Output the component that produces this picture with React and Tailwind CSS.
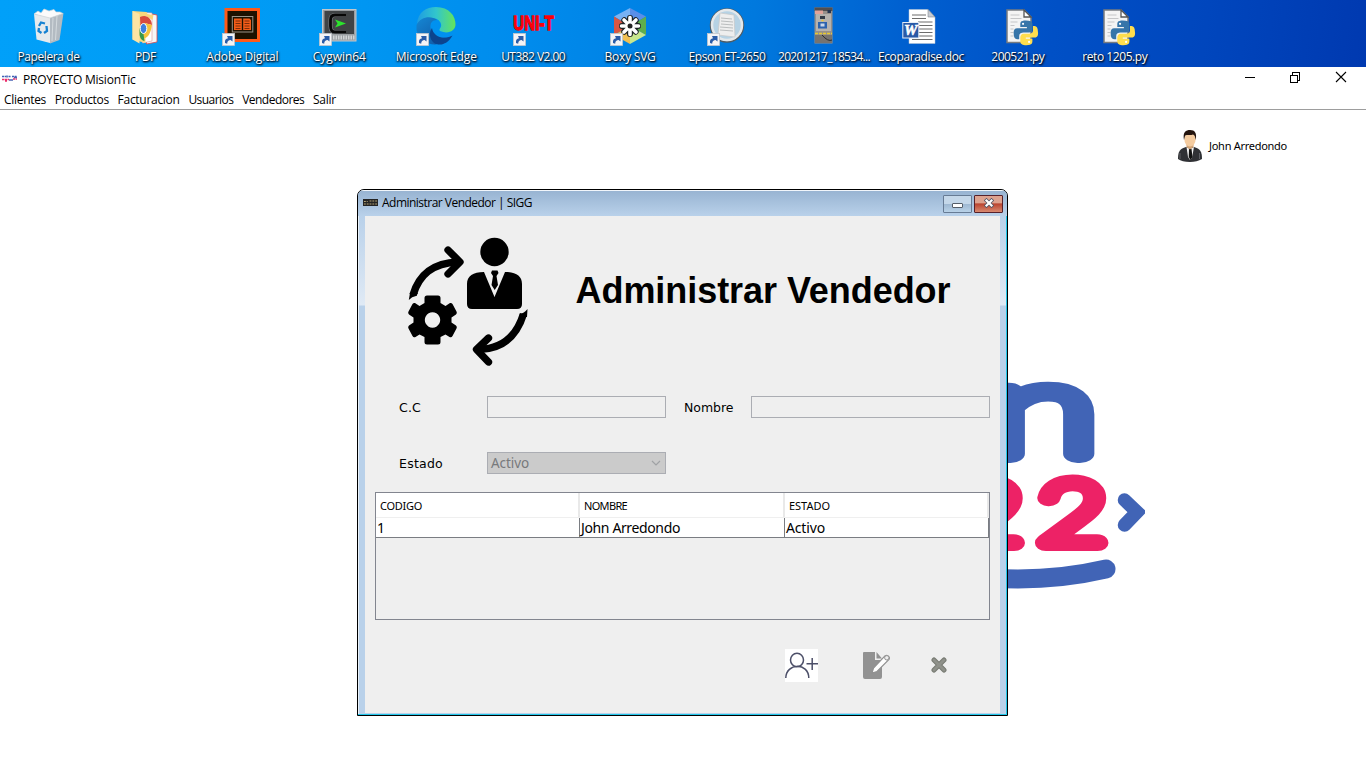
import { useLayoutEffect, useRef, useState } from "react";

// Single-line text whose tracking is adjusted so that it spans `w` pixels.
function Fit({ w, className = "", children }) {
  const ref = useRef(null);
  const [spacing, setSpacing] = useState(0);
  useLayoutEffect(() => {
    const natural = ref.current.getBoundingClientRect().width;
    setSpacing((w - natural) / String(children).length);
  }, [w, children]);
  return (
    <span ref={ref} className={`inline-block whitespace-pre ${className}`} style={{ letterSpacing: spacing }}>
      {children}
    </span>
  );
}

const Shortcut = () => (
  <g>
    <rect x="7.5" y="33.500" width="12" height="12" fill="#f4f4f6" stroke="#c2c6cc" strokeWidth="0.8" />
    <path d="M10 43C9.6 40 11 38.500 13 38.300L12 36H17.500V41.500L15.600 40.100C13.500 40.200 12.300 41.300 12.200 43.700Z" fill="#2a5ca8" />
  </g>
);

const Bin = () => (
  <g transform="translate(-5 0)">
    <path d="M18 14L34 17L34 43L20.500 39.500Z" fill="#e6eaed" />
    <path d="M34 17L47.500 13L43.500 40L34 43.500Z" fill="#b3bbc2" />
    <path d="M18 14L22 11L25 13L28 9L33 11L38 9.500L40 12L44 12L47 13.500L34 18Z" fill="#fbfbfb" stroke="#ccd2d6" strokeWidth=".7" />
    <path d="M37 18L36 41M41 16L39.500 40" stroke="#d4dade" strokeWidth="1" />
    <path d="M23 26L25 22.500L29 23.500M30.500 26L31 31L28 33M25.500 33L22.500 31L23 28" fill="none" stroke="#1682d2" strokeWidth="2.300" />
  </g>
);

const Folder = () => (
  <g transform="translate(-4.500 0)">
    <path d="M38 14L43.500 15V42L33 44V14Z" fill="#f7f7f7" stroke="#df4848" strokeWidth=".8" />
    <path d="M29 12.500L38.500 13V41L29 43Z" fill="#fff" stroke="#d99" strokeWidth=".6" />
    <path d="M19 11L33 12L34 14L40 15L39 20L32 16V43L19 39.500Z" fill="#f9d67c" />
    <path d="M19 11L26 14V43.500L19 39.500Z" fill="#fbe4a4" />
    <path d="M26.500 17C33 14 38 18 38.500 25L31 23L27 27Z" fill="#d94b3e" />
    <path d="M27 26L28 35C31 42 37 36 38.500 25L31 23Z" fill="#f5c33b" />
    <path d="M26 28L30 34L31 41C28 41 26 37 26 34Z" fill="#38984c" />
    <ellipse cx="30" cy="28.500" rx="3.300" ry="5" fill="#3e80dd" stroke="#fff" strokeWidth="1" />
  </g>
);

const AdobeDigital = () => (
  <g>
    <rect x="11" y="9.500" width="32.500" height="31" fill="#1d1100" stroke="#ff5a19" strokeWidth="3" />
    <rect x="17.300" y="16.500" width="20.500" height="15.500" fill="none" stroke="#9a9388" strokeWidth="1" />
    <g transform="translate(1.500 0)">
      <path d="M17.500 18.500H25.300V30H17.500ZM26.700 18.500H33L34.500 20V30H26.700Z" fill="#f45c18" />
      <path d="M19 21H24M19 23.500H24M19 26H24M19 28.500H24M28 21H33M28 23.500H33M28 26H33M28 28.500H33" stroke="#5d2108" strokeWidth=".8" />
    </g>
    <Shortcut />
  </g>
);

const Cygwin = () => (
  <g>
    <g transform="translate(1 0)">
      <rect x="9.500" y="9.500" width="33.500" height="31.500" fill="#9b9fa2" stroke="#c2c7cb" strokeWidth="1" />
      <rect x="11.500" y="11" width="29.500" height="23" fill="#404345" />
      <path d="M33 15H22Q17.500 15 17.500 20V26Q17.500 32 22 32H33" fill="none" stroke="#797d80" strokeWidth="4" />
      <path d="M33 15H22Q17.500 15 17.500 20V26Q17.500 32 22 32H33" fill="none" stroke="#070707" strokeWidth="2.800" />
      <path d="M22 19.500L33 23.500L22 27.500L24.500 23.500Z" fill="#2ce32c" />
      <path d="M20 37.500H42" stroke="#d0d3d5" strokeWidth="4" strokeDasharray="1.500 1" />
    </g>
    <Shortcut />
  </g>
);

const Edge = () => (
  <g>
    <defs>
      <linearGradient id="edgeTop" x1="0" x2="1"><stop offset="0" stopColor="#1e9ce2" /><stop offset=".5" stopColor="#32c6cc" /><stop offset="1" stopColor="#65e45a" /></linearGradient>
      <linearGradient id="edgeLow" x1="0" x2="1" y1="0" y2="1"><stop offset="0" stopColor="#1587d4" /><stop offset="1" stopColor="#10509c" /></linearGradient>
    </defs>
    <path d="M8 24C9 12 17 7 27 7C40 7 47 16 46.500 25C46 31 39 34.500 31 31C29 29 33 28 32 24C30 16 16 16 8 24Z" fill="url(#edgeTop)" />
    <path d="M7.500 25C11 17 22 15 28 20C23 20 21 23 21.500 28C22.500 36 32 40 42 36.500C34 48 12 48 7.500 30Z" fill="url(#edgeLow)" />
    <path d="M23 28C24 36 34 41 43.500 35.500C38 45 31 46 25 43C20 39 20 32 23 28Z" fill="#0c448e" />
    <Shortcut />
  </g>
);

const UniT = () => (
  <g>
    <text x="7.300" y="29.500" textLength="40.500" lengthAdjust="spacingAndGlyphs" fontFamily="Liberation Sans, sans-serif" fontWeight="700" fontSize="21" fill="#fb0008" stroke="#fb0008" strokeWidth="1.300">UNI-T</text>
    <Shortcut />
  </g>
);

const Boxy = () => (
  <g>
    <path d="M27 8L43 16.500L27 26Z" fill="#598ee8" />
    <path d="M27 8L11 16.500L27 26Z" fill="#77b2f4" />
    <path d="M11 16.500V35L27 26Z" fill="#d85643" />
    <path d="M43 16.500V35L27 26Z" fill="#5eae4d" />
    <path d="M11 35L27 44V26Z" fill="#f1bf52" />
    <path d="M27 44L43 35L27 26Z" fill="#c8e78d" />
    <g stroke="#1c2224" strokeWidth="6" strokeLinecap="round"><path d="M27 18V34M19 26H35M21.300 20.300L32.700 31.700M32.700 20.300L21.300 31.700" /></g>
    <g stroke="#fff" strokeWidth="3.600" strokeLinecap="round"><path d="M27 17.500V34.500M18.500 26H35.500M21 20L33 32M33 20L21 32" /></g>
    <circle cx="27" cy="26" r="2.500" fill="#222" />
    <Shortcut />
  </g>
);

const Epson = () => (
  <g>
    <circle cx="27" cy="25.500" r="16.500" fill="#9fbacd" stroke="#515c63" strokeWidth="1.500" />
    <circle cx="27" cy="25" r="15" fill="#b6d2e4" stroke="#e4e8eb" strokeWidth="2.500" />
    <path d="M20 13L34 15L35 37L18 35Z" fill="#eee" stroke="#c7c7c7" strokeWidth=".7" />
    <path d="M21 18L32 19M21 21L33 22M21 24L33 25M20 27L33 28M20 30L33 31" stroke="#babdbe" strokeWidth="1" />
    <Shortcut />
  </g>
);

const Photo = () => (
  <g transform="translate(-1 0)">
    <rect x="18.500" y="7.500" width="18" height="36" fill="#97908a" />
    <path d="M18.500 7.500H36.500V11H18.500Z" fill="#514e4f" />
    <path d="M19 10.500H27V14H19Z" fill="#e0a39a" />
    <path d="M20 14H35V31H20Z" fill="#b6b3ae" />
    <rect x="31.500" y="10" width="3.500" height="3" fill="#263650" />
    <rect x="24" y="16" width="5" height="3" fill="#333b46" />
    <rect x="22" y="22" width="9" height="6.500" fill="#2c63ae" />
    <rect x="24.500" y="23.500" width="4" height="3" fill="#c9d8ea" />
    <path d="M25.500 20.500H27.500M19 33.500H36" stroke="#e8c92f" strokeWidth="1.300" strokeDasharray="3 1" />
    <path d="M19 35H36V43H19Z" fill="#77736f" />
    <path d="M26 35Q32 42 36 40" fill="none" stroke="#2c2d30" />
  </g>
);

const Word = () => (
  <g transform="translate(-1 0)">
    <path d="M16 9.500H35L42 17V43.500H16Z" fill="#fff" stroke="#b7c2d1" strokeWidth=".5" />
    <path d="M35 9.500V17H42Z" fill="#c7cbd2" stroke="#6d747c" strokeWidth=".5" />
    <path d="M19 15H33M19 18.500H33M25 22H39.500M25 25.500H39.500M25 29H39.500M25 32.500H39.500M25 36H39.500M19 39.500H39.500" stroke="#6c6c6c" strokeWidth="1.100" />
    <rect x="9.800" y="22.500" width="16" height="15.500" fill="#2a5aa7" stroke="#e4ebf5" strokeWidth="1" />
    <text x="11" y="35" textLength="13.500" lengthAdjust="spacingAndGlyphs" fontFamily="Liberation Serif, serif" fontWeight="700" fontStyle="italic" fontSize="14" fill="#fff" stroke="#fff" strokeWidth=".5">W</text>
  </g>
);

const Python = () => (
  <g transform="translate(-.5 0)">
    <path d="M16.500 10H33.500L40.500 17V42.500H16.500Z" fill="#f4f4f4" stroke="#777b80" strokeWidth="1.500" />
    <path d="M33.500 10V17H40.500Z" fill="#fff" stroke="#555" strokeWidth="1.300" />
    <path d="M20 15H29M20 18.500H31M20 22H27M20 25.500H24M20 29H23M20 32.500H23M20 36H23" stroke="#c5c6c8" strokeWidth="1" />
    <g transform="translate(23.200 20.500) scale(1.100)">
      <path d="M11 0C6 0 6 2 6 4V6H12V7H3C0 7 0 10 0 12C0 15 1 17 3 17H5V14C5 12 7 11 9 11H14C16 11 17 9 17 7V3C17 1 15 0 11 0Z" fill="#3775a9" />
      <path d="M11.500 22.500C17 22.500 17 20.500 17 18.500V16.500H11V15.500H19C22 15.500 22.500 13 22 10C22 7 21 5 19 5H17.500V9C17.500 11 16 12 14 12H9C7 12 6 14 6 15.500V19C6 21 8 22.500 11.500 22.500Z" fill="#ffdd4d" />
      <circle cx="8.500" cy="3" r="1" fill="#fff" /><circle cx="14" cy="19.500" r="1" fill="#fff" />
    </g>
  </g>
);

const shortcuts = [
  ["Papelera de", 62, Bin],
  ["PDF", 21, Folder],
  ["Adobe Digital", 72, AdobeDigital],
  ["Cygwin64", 53, Cygwin],
  ["Microsoft Edge", 81, Edge],
  ["UT382 V2.00", 64, UniT],
  ["Boxy SVG", 51, Boxy],
  ["Epson ET-2650", 77, Epson],
  ["20201217_18534...", 92, Photo],
  ["Ecoparadise.doc", 86, Word],
  ["200521.py", 53, Python],
  ["reto 1205.py", 65, Python],
];

function Desktop() {
  return (
    <div className="flex h-[67px] overflow-hidden bg-[linear-gradient(97deg,#01a0f9_0%,#009af4_22%,#008ced_38%,#0079de_55%,#0060d0_66%,#0050c6_77%,#0046bd_88%,#0039b0_100%)]">
      {shortcuts.map(([name, w, Icon]) => (
        <div key={name} className="flex w-[96.950px] shrink-0 flex-col items-center">
          <svg className="h-[49px] w-[54px] shrink-0 overflow-visible" viewBox="0 0 54 49"><Icon /></svg>
          <Fit w={w} className="font-['Open_Sans',sans-serif] text-[12px] leading-[16px] text-white [text-shadow:1px_1px_2px_#000,0_1px_2px_#001a40]">{name}</Fit>
        </div>
      ))}
    </div>
  );
}

function MainBar() {
  const menu = [["Clientes", 42], ["Productos", 54], ["Facturacion", 62], ["Usuarios", 45], ["Vendedores", 62], ["Salir", 23]];
  return (
    <header className="flex h-[43px] flex-col border-b border-[#9d9d9d] bg-white font-['Open_Sans',sans-serif] text-[12px] text-black">
      <div className="flex h-[23px] items-center pl-[2px]">
        <svg className="h-[9px] w-4" viewBox="0 0 16 9">
          <path d="M0 2.500H4M5 1.500V4M6.500 2.500H9M10 2.500H15" stroke="#3f5fb4" strokeWidth="1.600" strokeDasharray="2 .6" />
          <path d="M0 5.500H7M11 5H15M3 7H5" stroke="#eb2d69" strokeWidth="1.600" strokeDasharray="2.500 .5" />
          <path d="M7 6H11M12 3.500H15" stroke="#4c65b5" strokeWidth="1.300" />
        </svg>
        <Fit w={112.5} className="ml-[5px] pt-px leading-[23px]">PROYECTO MisionTic</Fit>
        <div className="ml-auto flex h-[23px] w-[128px] items-start pt-1">
          <svg className="h-[13px] w-[120px]" viewBox="0 0 120 13" fill="none" stroke="#000">
            <path d="M7 6.500H17M52.500 4.500H59.500V11.500H52.500ZM54.500 4.500V1.500H61.500V9.500H59.500" shapeRendering="crispEdges" />
            <path d="M98 1L108 11M108 1L98 11" strokeWidth="1.100" />
          </svg>
        </div>
      </div>
      <nav className="flex h-[19px] items-center gap-[8.800px] pl-1 leading-[19px]">
        {menu.map(([t, w]) => <Fit key={t} w={w}>{t}</Fit>)}
      </nav>
    </header>
  );
}

const UserAvatar = () => (
  <svg className="h-[34px] w-[26px]" viewBox="0 0 26 34">
    <path d="M1 30C1 22 3 20 9 18H17C23 20 25 22 25 30Q20 33 13 33Q5 33 1 30Z" fill="#303135" />
    <path d="M9.500 18L13 20L17 18L15 29L13 31L11 28Z" fill="#f4f4f4" />
    <path d="M12 20H14.500L15.500 28L13.500 31L11.700 28Z" fill="#111" />
    <path d="M9.500 13H16.500V18L13 20.500L9.500 18Z" fill="#d3a476" />
    <ellipse cx="13" cy="10.500" rx="5.600" ry="7" fill="#f5cca0" />
    <path d="M7 11C5.500 3 9 1 13 1C18 1 20 4 18.800 11C18 8 18 6 16 5.500C13 7 9 5 8 7Z" fill="#24140e" />
    <path d="M3 24V30M22.500 24V30" stroke="#74767a" strokeWidth=".7" />
  </svg>
);

const BrandMark = () => (
  <svg className="h-[300px] w-[255px]" viewBox="-100 -70 255 300" fill="none">
    <g transform="translate(0 83.500) scale(1.550 1)">
      <text fontFamily="Lato, sans-serif" fontWeight="100" fontSize="126" fill="#4164b6" stroke="#4164b6" strokeWidth="18.500" strokeLinejoin="round" textLength="69" lengthAdjust="spacingAndGlyphs">n</text>
    </g>
    <g transform="translate(-35.500 173) scale(1.370 1)">
      <text fontFamily="Lato, sans-serif" fontWeight="100" fontSize="86" fill="#ed2266" stroke="#ed2266" strokeWidth="16" strokeLinejoin="round" letterSpacing="11">22</text>
    </g>
    <path d="M134.500 130L147 142L134.500 155" stroke="#4164b6" strokeWidth="13.500" strokeLinecap="round" strokeLinejoin="miter" />
    <path d="M0 208Q60 212 116 199" stroke="#4164b6" strokeWidth="19" strokeLinecap="round" />
  </svg>
);

const AdminIcon = () => (
  <svg className="h-[132px] w-[124px]" viewBox="0 0 124 132">
    <circle cx="88.500" cy="16" r="14.200" />
    <path d="M78 36C67 36 61 40 61 48V68Q61 73 66 73H111Q116 73 116 68V48C116 40 110 36 99 36L88.500 61Z" />
    <path d="M86 34.500H91.500L92.500 37L90.500 40L92 49L88.700 54L85.500 49L87 40L85 37Z" />
    <g fill="none" stroke="#000">
      <path d="M7 59C13 39 26 27 52 26" strokeWidth="7.500" />
      <path d="M42 14L54 26L42 38" strokeWidth="7.300" strokeLinecap="round" strokeLinejoin="round" />
      <path d="M117.500 78C111 99 97 113 73 113.500" strokeWidth="7.500" />
      <path d="M82.500 102L70.500 113.500L82.500 126" strokeWidth="7.300" strokeLinecap="round" strokeLinejoin="round" />
    </g>
    <path d="M2.800 64L4 57H12L10 60Q6 60.500 2.800 64ZM121.500 73Q118 77.500 113.500 78L115 81H121Z" />
    <g transform="translate(26.500 84)">
      <path fillRule="evenodd" d="M-8-22Q-8-24.500-5.500-24.500H5.500Q8-24.500 8-22V-17L13-14L17.500-17Q19-17.500 20-16L24-8.500Q25-7 23.500-5.500L19-2.500V2.500L23.500 5.500Q25 7 24 8.500L20 16Q19 18 17 17L13 14.500L8 17V22Q8 24.500 5.500 24.500H-5.500Q-8 24.500-8 22V17L-13 14.500L-17 17Q-19 18-20 16L-24 8.500Q-25 7-23.500 5.500L-19 2.500V-2.500L-23.500-5.500Q-25-7-24-8.500L-20-16Q-19-17.500-17.500-17L-13-14L-8-17ZM0-7.700A7.700 7.700 0 1 0 .01-7.700Z" />
    </g>
  </svg>
);

function TitleBar() {
  return (
    <div className="flex h-[26px] w-full items-start border-t border-[#f1f6fb] bg-linear-to-b from-[#98b4d2] to-[#b9d1ea] pl-[5px]">
      <svg className="mt-2 h-2 w-[15px]" viewBox="0 0 16 8" preserveAspectRatio="none">
        <rect width="16" height="7" fill="#242424" />
        <path d="M1 2.500H5M7 2H15M1 5H15" stroke="#b5a475" strokeWidth="1.200" strokeDasharray="2 1" />
      </svg>
      <Fit w={150} className="ml-1 font-['Open_Sans',sans-serif] text-[12px] leading-[24px] text-black">Administrar Vendedor | SIGG</Fit>
      <div className="ml-auto mr-1 flex gap-[2px] pt-1">
        <div className="flex h-[18px] w-[29px] items-end justify-center rounded-[1px] border border-[#677b94] bg-[linear-gradient(#c4d7e9_0_48%,#9db7d1_49%,#b9d2e8)] pb-[4px]">
          <div className="h-[5px] w-[11px] rounded-[1px] border border-[#555e69] bg-white" />
        </div>
        <div className="flex h-[18px] w-[29px] items-start justify-center rounded-[1px] border border-[#56202a] bg-[linear-gradient(#dda28f_0_45%,#b9422e_48%,#d88970)] pt-[2px]">
          <svg className="h-[10px] w-3" viewBox="0 0 12 10">
            <path d="M3.500 2.500L8.500 7.500M8.500 2.500L3.500 7.500" stroke="#535666" strokeWidth="3.800" strokeLinecap="square" />
            <path d="M3.500 2.500L8.500 7.500M8.500 2.500L3.500 7.500" stroke="#fff" strokeWidth="2.200" strokeLinecap="square" />
          </svg>
        </div>
      </div>
    </div>
  );
}

const fieldFont = "font-['DejaVu_Sans',sans-serif] text-[12.500px] text-black";

function VendorTable() {
  const cols = [["CODIGO", 42, "1", 8, "w-[204px]"], ["NOMBRE", 43, "John Arredondo", 99, "w-[205px]"], ["ESTADO", 41, "Activo", 39, "w-[204px]"]];
  return (
    <div className="mx-[10px] h-[128px] border border-[#82858f]">
      <div className="flex h-[25px] border-b border-[#efefef] bg-white">
        {cols.map(([h, w, , , cw]) => (
          <div key={h} className={`flex shrink-0 items-center border-r-2 border-[#e9e9e9] pl-1 pt-[2px] ${cw}`}>
            <Fit w={w} className="font-['Noto_Sans',sans-serif] text-[11px] leading-[22px] text-black">{h}</Fit>
          </div>
        ))}
        <div className="grow bg-white" />
      </div>
      <div className="flex h-5 w-[613px] border-b border-[#7a7d82] bg-white">
        {cols.map(([h, , v, w, cw]) => (
          <div key={h} className={`flex shrink-0 items-center border-r border-[#7a7d82] pl-px ${cw}`}>
            <Fit w={w} className="font-['Noto_Sans',sans-serif] text-[14px] leading-[19px] text-black">{v}</Fit>
          </div>
        ))}
      </div>
    </div>
  );
}

function VendorWindow() {
  return (
    <section className="absolute left-[357px] top-[189px] flex h-[527px] w-[651px] flex-col overflow-hidden rounded-t-[7px] border border-black bg-[#b9d1ea]">
      <TitleBar />
      <div className="flex h-[499px] border-b border-[#21c7ea]">
        <div className="w-[7px] border-l border-[#e9f2fa] bg-[linear-gradient(#b9d1ea_0,#e0eaf5_89px,#b9d1ea_90px)]" />
        <main className="flex h-[497px] w-[635px] flex-col bg-[#efefef]">
          <div className="flex h-[180px] items-start pl-[41px] pt-5">
            <AdminIcon />
            <Fit w={375} className="ml-[45.500px] mt-[33px] font-['Liberation_Sans',sans-serif] text-[36px] font-bold leading-[44px] text-black">Administrar Vendedor</Fit>
          </div>
          <div className={`flex h-[22px] items-center pl-[34px] ${fieldFont}`}>
            <div className="w-[88px] pt-[2px]"><Fit w={22}>C.C</Fit></div>
            <div className="h-[22px] w-[179px] border border-[#abadb3]" />
            <div className="w-[85px] pl-[18px] pt-[2px]"><Fit w={49.500}>Nombre</Fit></div>
            <div className="h-[22px] w-[239px] border border-[#abadb3]" />
          </div>
          <div className={`mt-[34px] flex h-[22px] items-center pl-[34px] ${fieldFont}`}>
            <div className="w-[88px] pt-[2px]"><Fit w={44}>Estado</Fit></div>
            <div className="flex h-[22px] w-[179px] items-center justify-between border border-[#abadb3] bg-[#cbcbcb] pl-[3px] pr-1 text-[#77797c]">
              <Fit w={38} className="font-['Noto_Sans',sans-serif] text-[13.500px] leading-5">Activo</Fit>
              <svg className="h-[6px] w-[10px]" viewBox="0 0 10 6"><path d="M1 1L5 5L9 1" fill="none" stroke="#a0a2a5" strokeWidth="1.200" /></svg>
            </div>
          </div>
          <div className="h-[18px] shrink-0" />
          <VendorTable />
          <div className="mt-[29px] flex h-[33px] items-start pl-[420px]">
            <svg className="h-[33px] w-[33px] bg-white" viewBox="0 0 33 33" fill="none" stroke="#4c4f68" strokeWidth="1.500">
              <ellipse cx="12" cy="11" rx="6.500" ry="6.800" />
              <path d="M.8 29C1 14 23.500 13 23.800 29M21.500 14.800H33M27.200 9V21" />
            </svg>
            <svg className="ml-[44px] mt-[2px] h-[29px] w-[30px]" viewBox="0 0 30 29">
              <path d="M2 1H13V9H20V26Q20 28 18 28H3Q1 28 1 26V2Q1 1 2 1ZM14.500 1L20 7.500H14.500Z" fill="#929292" />
              <path d="M10 22L11.500 17L22 6C24 2.500 28.500 5.500 27 8.500L15 20.500Z" fill="#fff" stroke="#909090" strokeWidth="1.200" />
              <circle cx="24.800" cy="6.800" r="2.200" fill="#eee" stroke="#929292" />
            </svg>
            <svg className="ml-[39px] mt-2 h-4 w-4" viewBox="0 0 16 16">
              <path d="M3 3L13 13M13 3L3 13" stroke="#777a72" strokeWidth="5" strokeLinecap="round" />
              <path d="M3 3L13 13M13 3L3 13" stroke="#8f918a" strokeWidth="3" strokeLinecap="round" />
            </svg>
          </div>
        </main>
        <div className="w-[7px] border-r border-[#21c7ea] bg-[linear-gradient(#b9d1ea_0,#e0eaf5_89px,#b9d1ea_90px)]" />
      </div>
    </section>
  );
}

export default function App() {
  return (
    <div className="relative flex h-[768px] w-[1366px] flex-col overflow-hidden bg-white">
      <Desktop />
      <MainBar />
      <div className="flex grow flex-col">
        <div className="flex h-[72px] items-center justify-end pr-[79px]">
          <UserAvatar />
          <Fit w={78} className="ml-[6px] font-['Noto_Sans',sans-serif] text-[11px] leading-4 text-black">John Arredondo</Fit>
        </div>
        <div className="ml-[890px] mt-[118px] w-[255px]"><BrandMark /></div>
      </div>
      <VendorWindow />
    </div>
  );
}
